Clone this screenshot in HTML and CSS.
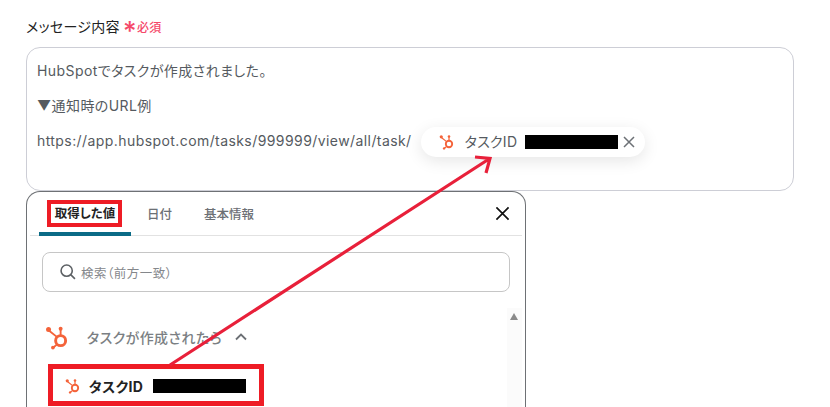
FILE: index.html

```html
<!DOCTYPE html>
<html>
<head>
    <title>メッセージ内容</title>
    <link rel="stylesheet" href="styles.css">
</head>
<body>
    <svg width="0" height="0" class="defs">
        <symbol id="hubspot" viewBox="0 0 24 24">
            <circle cx="15" cy="15" r="4.800" fill="none" stroke="currentColor" stroke-width="2.800"/>
            <path d="M15 10V4.500M11.400 11.400L4 5.500M11.600 18.600L8 21.500" fill="none" stroke="currentColor" stroke-width="1.800"/>
            <circle cx="15" cy="3.600" r="1.900" fill="currentColor"/>
            <circle cx="3.400" cy="4.200" r="2.400" fill="currentColor"/>
            <circle cx="7.600" cy="21.600" r="1.800" fill="currentColor"/>
        </symbol>
    </svg>

    <div class="page">
        <div class="field-label">
            <span>メッセージ内容</span>
            <span class="required"><span class="star">*</span>必須</span>
        </div>

        <div class="message-box">
            <p class="line">HubSpotでタスクが作成されました。</p>
            <p class="line">▼通知時のURL例</p>
            <p class="line url-line">
                <span>https://app.hubspot.com/tasks/999999/view/all/task/</span>
                <span class="chip">
                    <svg class="chip-icon"><use href="#hubspot"/></svg>
                    <span class="chip-text">タスクID</span>
                    <span class="redacted"></span>
                    <svg class="chip-close" viewBox="0 0 14 14"><path d="M2 2L12 12M12 2L2 12"/></svg>
                </span>
            </p>
        </div>

        <div class="panel">
            <div class="tabs">
                <div class="tab tab-active">取得した値</div>
                <div class="tab">日付</div>
                <div class="tab">基本情報</div>
                <svg class="panel-close" viewBox="0 0 16 16"><path d="M1.500 1.500L14.500 14.500M14.500 1.500L1.500 14.500"/></svg>
            </div>

            <div class="search">
                <svg class="search-icon" viewBox="0 0 18 18"><circle cx="7.500" cy="7.500" r="6.300"/><path d="M12 12L16.800 16.800"/></svg>
                <span>検索（前方一致）</span>
            </div>

            <div class="results">
                <div class="list">
                    <div class="group">
                        <svg class="group-icon"><use href="#hubspot"/></svg>
                        <span>タスクが作成されたら</span>
                        <svg class="chevron" viewBox="0 0 12 8"><path d="M1 6.500L6 1.500L11 6.500"/></svg>
                    </div>
                    <div class="item">
                        <svg class="item-icon"><use href="#hubspot"/></svg>
                        <span class="item-text">タスクID</span>
                        <span class="redacted"></span>
                    </div>
                </div>
                <div class="scrollbar"><div class="scroll-up"></div></div>
            </div>
        </div>
    </div>

    <!-- annotations drawn over the screenshot -->
    <div class="mark mark-tab"></div>
    <div class="mark mark-item"></div>
    <svg class="arrow" width="830" height="407" viewBox="0 0 830 407">
        <path d="M170 365L489 159M475 157L490 158.500L486 173"/>
    </svg>
</body>
</html>
```

FILE: styles.css

```css
body {
    margin: 0;
    width: 830px;
    height: 407px;
    overflow: hidden;
    background: #fff;
    font-family: Inter, "Noto Sans CJK JP", sans-serif;
    font-size: 14px;
    font-feature-settings: "palt";
    color: #555a60;
}
.defs {
    display: block;
    height: 0;
}
.page {
    padding: 16px 36px 0 26px;
}
.field-label {
    display: flex;
    align-items: center;
    gap: 3px;
    height: 20px;
    margin-bottom: 11px;
    letter-spacing: 0.300px;
    color: #222;
}
.required {
    display: flex;
    align-items: center;
    font-size: 12px;
    font-weight: 500;
    letter-spacing: 0.400px;
    color: #f5486a;
}
.star {
    width: 14px;
    font-size: 26px;
    line-height: 20px;
    padding-top: 9px;
}
.message-box {
    box-sizing: border-box;
    height: 144px;
    padding: 5px 10px;
    border: 1px solid #cdced6;
    border-radius: 14px;
}
.line {
    display: flex;
    align-items: center;
    height: 35px;
    margin: 0;
    line-height: 20px;
    white-space: nowrap;
    letter-spacing: 0.420px;
}
.url-line {
    gap: 9px;
}
.chip {
    display: flex;
    align-items: center;
    box-sizing: border-box;
    width: 224px;
    height: 30px;
    margin-top: 2px;
    padding-left: 18px;
    border-radius: 15px;
    background: #fff;
    box-shadow: 0 4px 16px rgba(0, 0, 0, 0.1);
    letter-spacing: 0.300px;
}
.chip-icon {
    width: 16px;
    height: 16px;
    color: #f4633a;
}
.chip-text {
    width: 53px;
    margin-left: 10px;
    white-space: nowrap;
}
.chip .redacted {
    margin-left: 7px;
}
.chip-close {
    width: 14px;
    height: 14px;
    margin-left: 4px;
    fill: none;
    stroke: #6d7176;
    stroke-width: 1.500;
}
.redacted {
    width: 93px;
    height: 14px;
    background: #000;
}
.panel {
    box-sizing: border-box;
    width: 500px;
    height: 216px;
    overflow: hidden;
    border: 1px solid #6e7175;
    border-bottom: none;
    border-radius: 14px 14px 0 0;
    padding: 0 3px;
}
.tabs {
    display: flex;
    align-items: center;
    height: 43px;
    padding-left: 9px;
    border-bottom: 1px solid #e2e2e2;
    font-size: 12.500px;
    font-weight: 500;
    color: #6c7075;
}
.tab {
    display: flex;
    align-items: center;
    justify-content: center;
    align-self: stretch;
    box-sizing: border-box;
    padding: 0 16px;
}
.tab-active {
    width: 92px;
    padding: 0;
    border-bottom: 4px solid #0a6b86;
    border-radius: 3px 3px 0 0;
    margin-bottom: -1px;
    font-weight: 700;
    color: #222;
}
.panel-close {
    width: 15px;
    height: 15px;
    margin-left: auto;
    margin-right: 12px;
    fill: none;
    stroke: #111;
    stroke-width: 1.800;
}
.search {
    display: flex;
    align-items: center;
    gap: 5px;
    box-sizing: border-box;
    height: 40px;
    margin: 16px 12px 0 12px;
    padding-left: 17px;
    border: 1px solid #c6c6c6;
    border-radius: 8px;
    font-size: 12.500px;
    letter-spacing: 0.500px;
    color: #84878b;
}
.search-icon {
    width: 16px;
    height: 16px;
    fill: none;
    stroke: #5d6165;
    stroke-width: 1.800;
}
.results {
    display: flex;
    justify-content: space-between;
    margin-top: 16px;
}
.list {
    flex: 1;
    padding-left: 15px;
}
.group {
    display: flex;
    align-items: center;
    height: 38px;
    margin-top: 10px;
    font-weight: 500;
    letter-spacing: 0.400px;
    color: #7b7f83;
}
.group-icon {
    width: 25px;
    height: 25px;
    margin-right: 17px;
    color: #f4633a;
}
.chevron {
    width: 12px;
    height: 8px;
    margin-left: 13px;
    fill: none;
    stroke: #6c7075;
    stroke-width: 1.800;
}
.item {
    display: flex;
    align-items: center;
    height: 36px;
    margin-top: 12px;
    padding-left: 20px;
    font-weight: 700;
    letter-spacing: 0.300px;
    color: #222;
}
.item-icon {
    width: 16px;
    height: 16px;
    margin-right: 8px;
    color: #f4633a;
}
.item-text {
    width: 54px;
    white-space: nowrap;
}
.item .redacted {
    margin-left: 10px;
}
.scrollbar {
    width: 15px;
    height: 100px;
    background: #fbfbfb;
}
.scroll-up {
    width: 0;
    height: 0;
    margin: 5px 0 0 3px;
    border-left: 4.500px solid transparent;
    border-right: 4.500px solid transparent;
    border-bottom: 7px solid #8a8a8a;
}
.mark {
    position: absolute;
    box-sizing: border-box;
    border-style: solid;
    border-color: #ee1c25;
}
.mark-tab {
    left: 47px;
    top: 200px;
    width: 75px;
    height: 27px;
    border-width: 4px;
}
.mark-item {
    left: 48px;
    top: 364px;
    width: 216px;
    height: 42px;
    border-width: 5px;
}
.arrow {
    position: absolute;
    left: 0;
    top: 0;
    fill: none;
    stroke: #e8203a;
    stroke-width: 3.200;
}
```
